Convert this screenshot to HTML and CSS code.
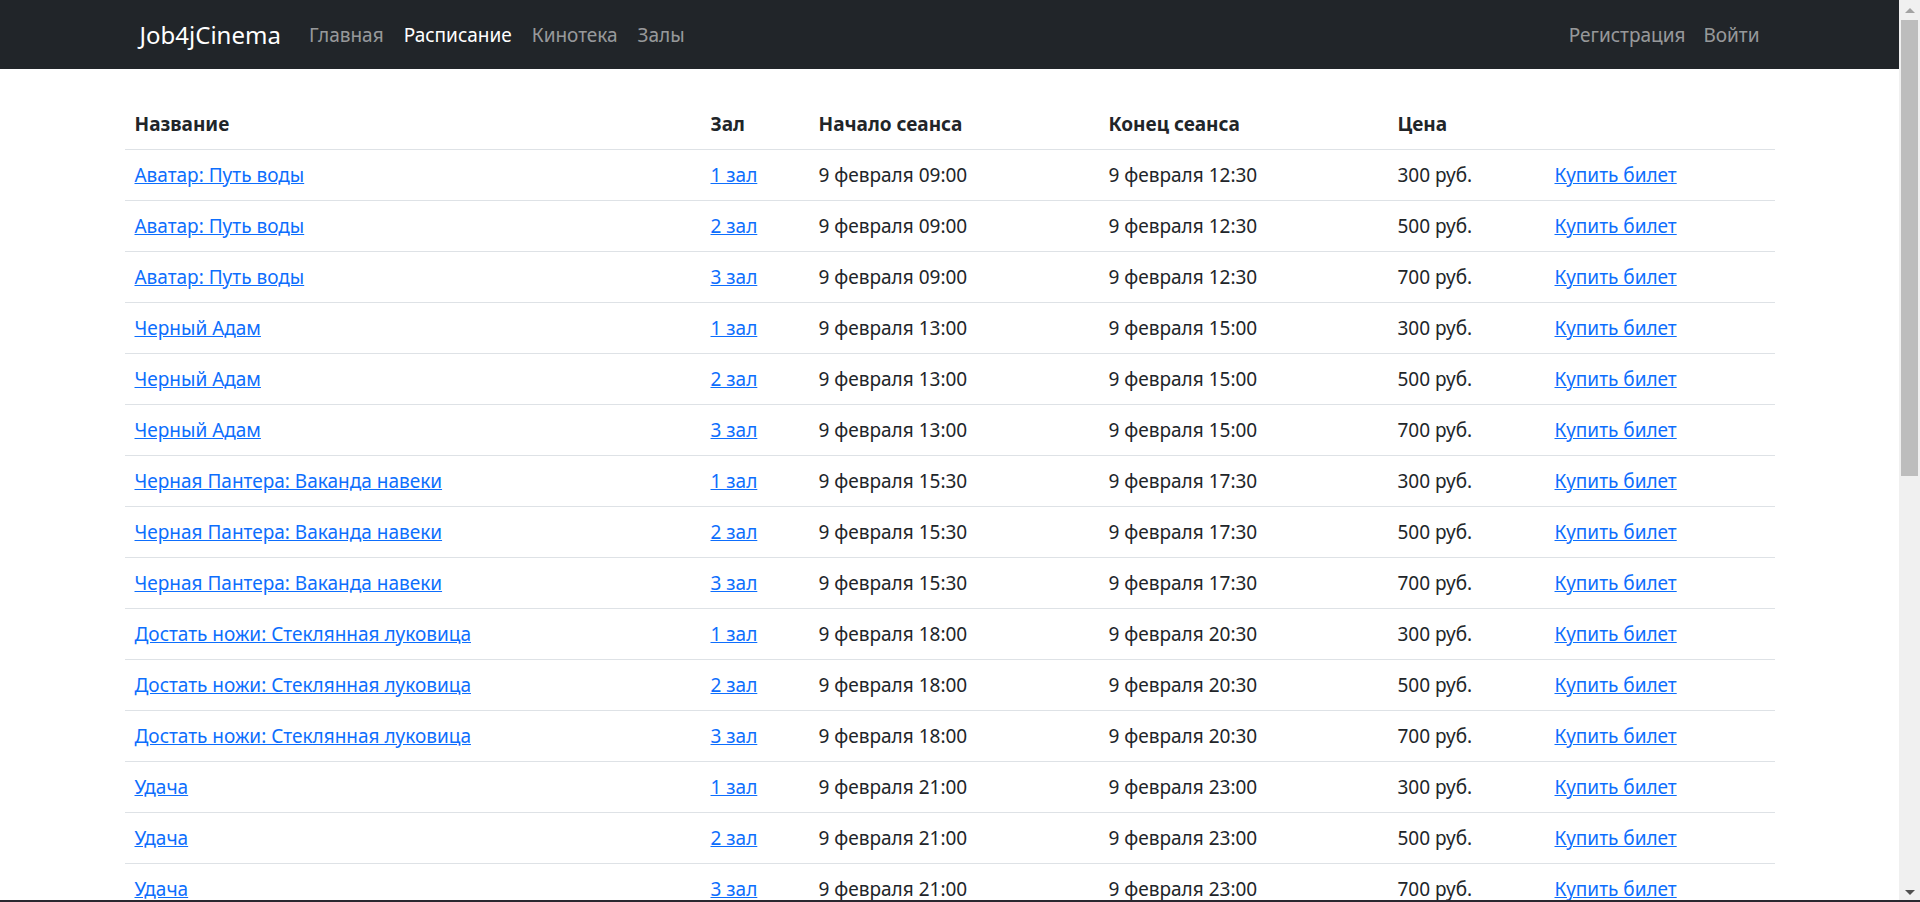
FILE: index.html
```html
<!DOCTYPE html>
<html lang="ru">
<head>
<meta charset="utf-8">
<title>Расписание</title>
<link rel="stylesheet" href="styles.css">
</head>
<body>
<div class="page">
<nav class="navbar">
  <div class="container nav-inner">
    <a class="brand" href="#">Job4jCinema</a>
    <ul class="nav-links">
      <li><a href="#">Главная</a></li>
      <li><a class="active" href="#">Расписание</a></li>
      <li><a href="#">Кинотека</a></li>
      <li><a href="#">Залы</a></li>
    </ul>
    <ul class="nav-links nav-right">
      <li><a href="#">Регистрация</a></li>
      <li><a href="#">Войти</a></li>
    </ul>
  </div>
</nav>
<main class="container content">
  <table class="table">
    <colgroup>
      <col class="c-name"><col class="c-hall"><col class="c-start"><col class="c-end"><col class="c-price"><col class="c-buy">
    </colgroup>
    <thead>
      <tr><th>Название</th><th>Зал</th><th>Начало сеанса</th><th>Конец сеанса</th><th>Цена</th><th></th></tr>
    </thead>
    <tbody>
      <tr><td><a href="#">Аватар: Путь воды</a></td><td><a href="#">1 зал</a></td><td>9 февраля 09:00</td><td>9 февраля 12:30</td><td>300 руб.</td><td><a href="#">Купить билет</a></td></tr>
      <tr><td><a href="#">Аватар: Путь воды</a></td><td><a href="#">2 зал</a></td><td>9 февраля 09:00</td><td>9 февраля 12:30</td><td>500 руб.</td><td><a href="#">Купить билет</a></td></tr>
      <tr><td><a href="#">Аватар: Путь воды</a></td><td><a href="#">3 зал</a></td><td>9 февраля 09:00</td><td>9 февраля 12:30</td><td>700 руб.</td><td><a href="#">Купить билет</a></td></tr>
      <tr><td><a href="#">Черный Адам</a></td><td><a href="#">1 зал</a></td><td>9 февраля 13:00</td><td>9 февраля 15:00</td><td>300 руб.</td><td><a href="#">Купить билет</a></td></tr>
      <tr><td><a href="#">Черный Адам</a></td><td><a href="#">2 зал</a></td><td>9 февраля 13:00</td><td>9 февраля 15:00</td><td>500 руб.</td><td><a href="#">Купить билет</a></td></tr>
      <tr><td><a href="#">Черный Адам</a></td><td><a href="#">3 зал</a></td><td>9 февраля 13:00</td><td>9 февраля 15:00</td><td>700 руб.</td><td><a href="#">Купить билет</a></td></tr>
      <tr><td><a href="#">Черная Пантера: Ваканда навеки</a></td><td><a href="#">1 зал</a></td><td>9 февраля 15:30</td><td>9 февраля 17:30</td><td>300 руб.</td><td><a href="#">Купить билет</a></td></tr>
      <tr><td><a href="#">Черная Пантера: Ваканда навеки</a></td><td><a href="#">2 зал</a></td><td>9 февраля 15:30</td><td>9 февраля 17:30</td><td>500 руб.</td><td><a href="#">Купить билет</a></td></tr>
      <tr><td><a href="#">Черная Пантера: Ваканда навеки</a></td><td><a href="#">3 зал</a></td><td>9 февраля 15:30</td><td>9 февраля 17:30</td><td>700 руб.</td><td><a href="#">Купить билет</a></td></tr>
      <tr><td><a href="#">Достать ножи: Стеклянная луковица</a></td><td><a href="#">1 зал</a></td><td>9 февраля 18:00</td><td>9 февраля 20:30</td><td>300 руб.</td><td><a href="#">Купить билет</a></td></tr>
      <tr><td><a href="#">Достать ножи: Стеклянная луковица</a></td><td><a href="#">2 зал</a></td><td>9 февраля 18:00</td><td>9 февраля 20:30</td><td>500 руб.</td><td><a href="#">Купить билет</a></td></tr>
      <tr><td><a href="#">Достать ножи: Стеклянная луковица</a></td><td><a href="#">3 зал</a></td><td>9 февраля 18:00</td><td>9 февраля 20:30</td><td>700 руб.</td><td><a href="#">Купить билет</a></td></tr>
      <tr><td><a href="#">Удача</a></td><td><a href="#">1 зал</a></td><td>9 февраля 21:00</td><td>9 февраля 23:00</td><td>300 руб.</td><td><a href="#">Купить билет</a></td></tr>
      <tr><td><a href="#">Удача</a></td><td><a href="#">2 зал</a></td><td>9 февраля 21:00</td><td>9 февраля 23:00</td><td>500 руб.</td><td><a href="#">Купить билет</a></td></tr>
      <tr><td><a href="#">Удача</a></td><td><a href="#">3 зал</a></td><td>9 февраля 21:00</td><td>9 февраля 23:00</td><td>700 руб.</td><td><a href="#">Купить билет</a></td></tr>
      <tr><td><a href="#">Аватар: Путь воды</a></td><td><a href="#">1 зал</a></td><td>10 февраля 09:00</td><td>10 февраля 12:30</td><td>300 руб.</td><td><a href="#">Купить билет</a></td></tr>
      <tr><td><a href="#">Аватар: Путь воды</a></td><td><a href="#">2 зал</a></td><td>10 февраля 09:00</td><td>10 февраля 12:30</td><td>500 руб.</td><td><a href="#">Купить билет</a></td></tr>
      <tr><td><a href="#">Аватар: Путь воды</a></td><td><a href="#">3 зал</a></td><td>10 февраля 09:00</td><td>10 февраля 12:30</td><td>700 руб.</td><td><a href="#">Купить билет</a></td></tr>
      <tr><td><a href="#">Черный Адам</a></td><td><a href="#">1 зал</a></td><td>10 февраля 13:00</td><td>10 февраля 15:00</td><td>300 руб.</td><td><a href="#">Купить билет</a></td></tr>
      <tr><td><a href="#">Черный Адам</a></td><td><a href="#">2 зал</a></td><td>10 февраля 13:00</td><td>10 февраля 15:00</td><td>500 руб.</td><td><a href="#">Купить билет</a></td></tr>
      <tr><td><a href="#">Черный Адам</a></td><td><a href="#">3 зал</a></td><td>10 февраля 13:00</td><td>10 февраля 15:00</td><td>700 руб.</td><td><a href="#">Купить билет</a></td></tr>
      <tr><td><a href="#">Черная Пантера: Ваканда навеки</a></td><td><a href="#">1 зал</a></td><td>10 февраля 15:30</td><td>10 февраля 17:30</td><td>300 руб.</td><td><a href="#">Купить билет</a></td></tr>
      <tr><td><a href="#">Черная Пантера: Ваканда навеки</a></td><td><a href="#">2 зал</a></td><td>10 февраля 15:30</td><td>10 февраля 17:30</td><td>500 руб.</td><td><a href="#">Купить билет</a></td></tr>
      <tr><td><a href="#">Черная Пантера: Ваканда навеки</a></td><td><a href="#">3 зал</a></td><td>10 февраля 15:30</td><td>10 февраля 17:30</td><td>700 руб.</td><td><a href="#">Купить билет</a></td></tr>
      <tr><td><a href="#">Достать ножи: Стеклянная луковица</a></td><td><a href="#">1 зал</a></td><td>10 февраля 18:00</td><td>10 февраля 20:30</td><td>300 руб.</td><td><a href="#">Купить билет</a></td></tr>
      <tr><td><a href="#">Достать ножи: Стеклянная луковица</a></td><td><a href="#">2 зал</a></td><td>10 февраля 18:00</td><td>10 февраля 20:30</td><td>500 руб.</td><td><a href="#">Купить билет</a></td></tr>
      <tr><td><a href="#">Достать ножи: Стеклянная луковица</a></td><td><a href="#">3 зал</a></td><td>10 февраля 18:00</td><td>10 февраля 20:30</td><td>700 руб.</td><td><a href="#">Купить билет</a></td></tr>
    </tbody>
  </table>
</main>
</div>
<div class="scrollbar" aria-hidden="true">
  <div class="sb-arrow sb-up"></div>
  <div class="sb-track"><div class="sb-thumb"></div></div>
  <div class="sb-arrow sb-down"></div>
</div>
<div class="taskbar-edge" aria-hidden="true"></div>
</body>
</html>
```

FILE: styles.css
```css
* { box-sizing: border-box; }
html, body { margin: 0; padding: 0; }
body {
  font-family: "Noto Sans", "Open Sans", sans-serif;
  font-size: 19px;
  line-height: 30px;
  color: #212529;
  background: #fff;
}
a { color: #0d6efd; }
.page { width: calc(100% - 21px); }
.container {
  width: 100%;
  max-width: 1650px;
  margin: 0 auto;
  padding: 0 15px;
}
.navbar {
  background: #212529;
  padding: 10px 0;
}
.nav-inner {
  display: flex;
  align-items: center;
  height: 49px;
  padding-right: 6px;
}
.brand {
  color: #fff;
  text-decoration: none;
  font-size: 24px;
  margin-right: 18px;
  line-height: 37px;
}
.nav-links {
  display: flex;
  list-style: none;
  margin: 0;
  padding: 0;
}
.nav-links a {
  display: block;
  padding: 10px 10px;
  color: rgba(255,255,255,.55);
  text-decoration: none;
}
.nav-links a.active { color: #fff; }
.nav-right { margin-left: auto; }
.nav-right a { padding: 10px 9px; }
.content { padding-top: 30px; padding-left: 0; padding-right: 0; }
.table {
  width: 100%;
  border-collapse: collapse;
  margin-bottom: 20px;
  table-layout: fixed;
}
.table th, .table td {
  padding: 10px 10px;
  text-align: left;
  border-bottom: 1px solid #dee2e6;
  vertical-align: top;
  white-space: nowrap;
}
.table th { font-weight: 700; }
.c-name { width: 576px; }
.c-hall { width: 108px; }
.c-start { width: 290px; }
.c-end { width: 289px; }
.c-price { width: 157px; }

.scrollbar {
  position: fixed;
  top: 0;
  right: 0;
  bottom: 0;
  width: 21px;
  background: #f0f0f0;
  display: flex;
  flex-direction: column;
}
.sb-arrow {
  height: 20px;
  display: flex;
  align-items: center;
  justify-content: center;
}
.sb-up::before, .sb-down::before {
  content: "";
  width: 0;
  height: 0;
  border-left: 5px solid transparent;
  border-right: 5px solid transparent;
}
.sb-up::before { border-bottom: 5px solid #a3a3a3; }
.sb-down::before { border-top: 5px solid #505050; }
.sb-track { flex: 1; padding: 0 2px; }
.sb-thumb {
  height: 456px;
  background: #bdbdbd;
}
.taskbar-edge {
  position: fixed;
  left: 0;
  right: 0;
  bottom: 0;
  height: 2px;
  background: #2a2830;
}
```
